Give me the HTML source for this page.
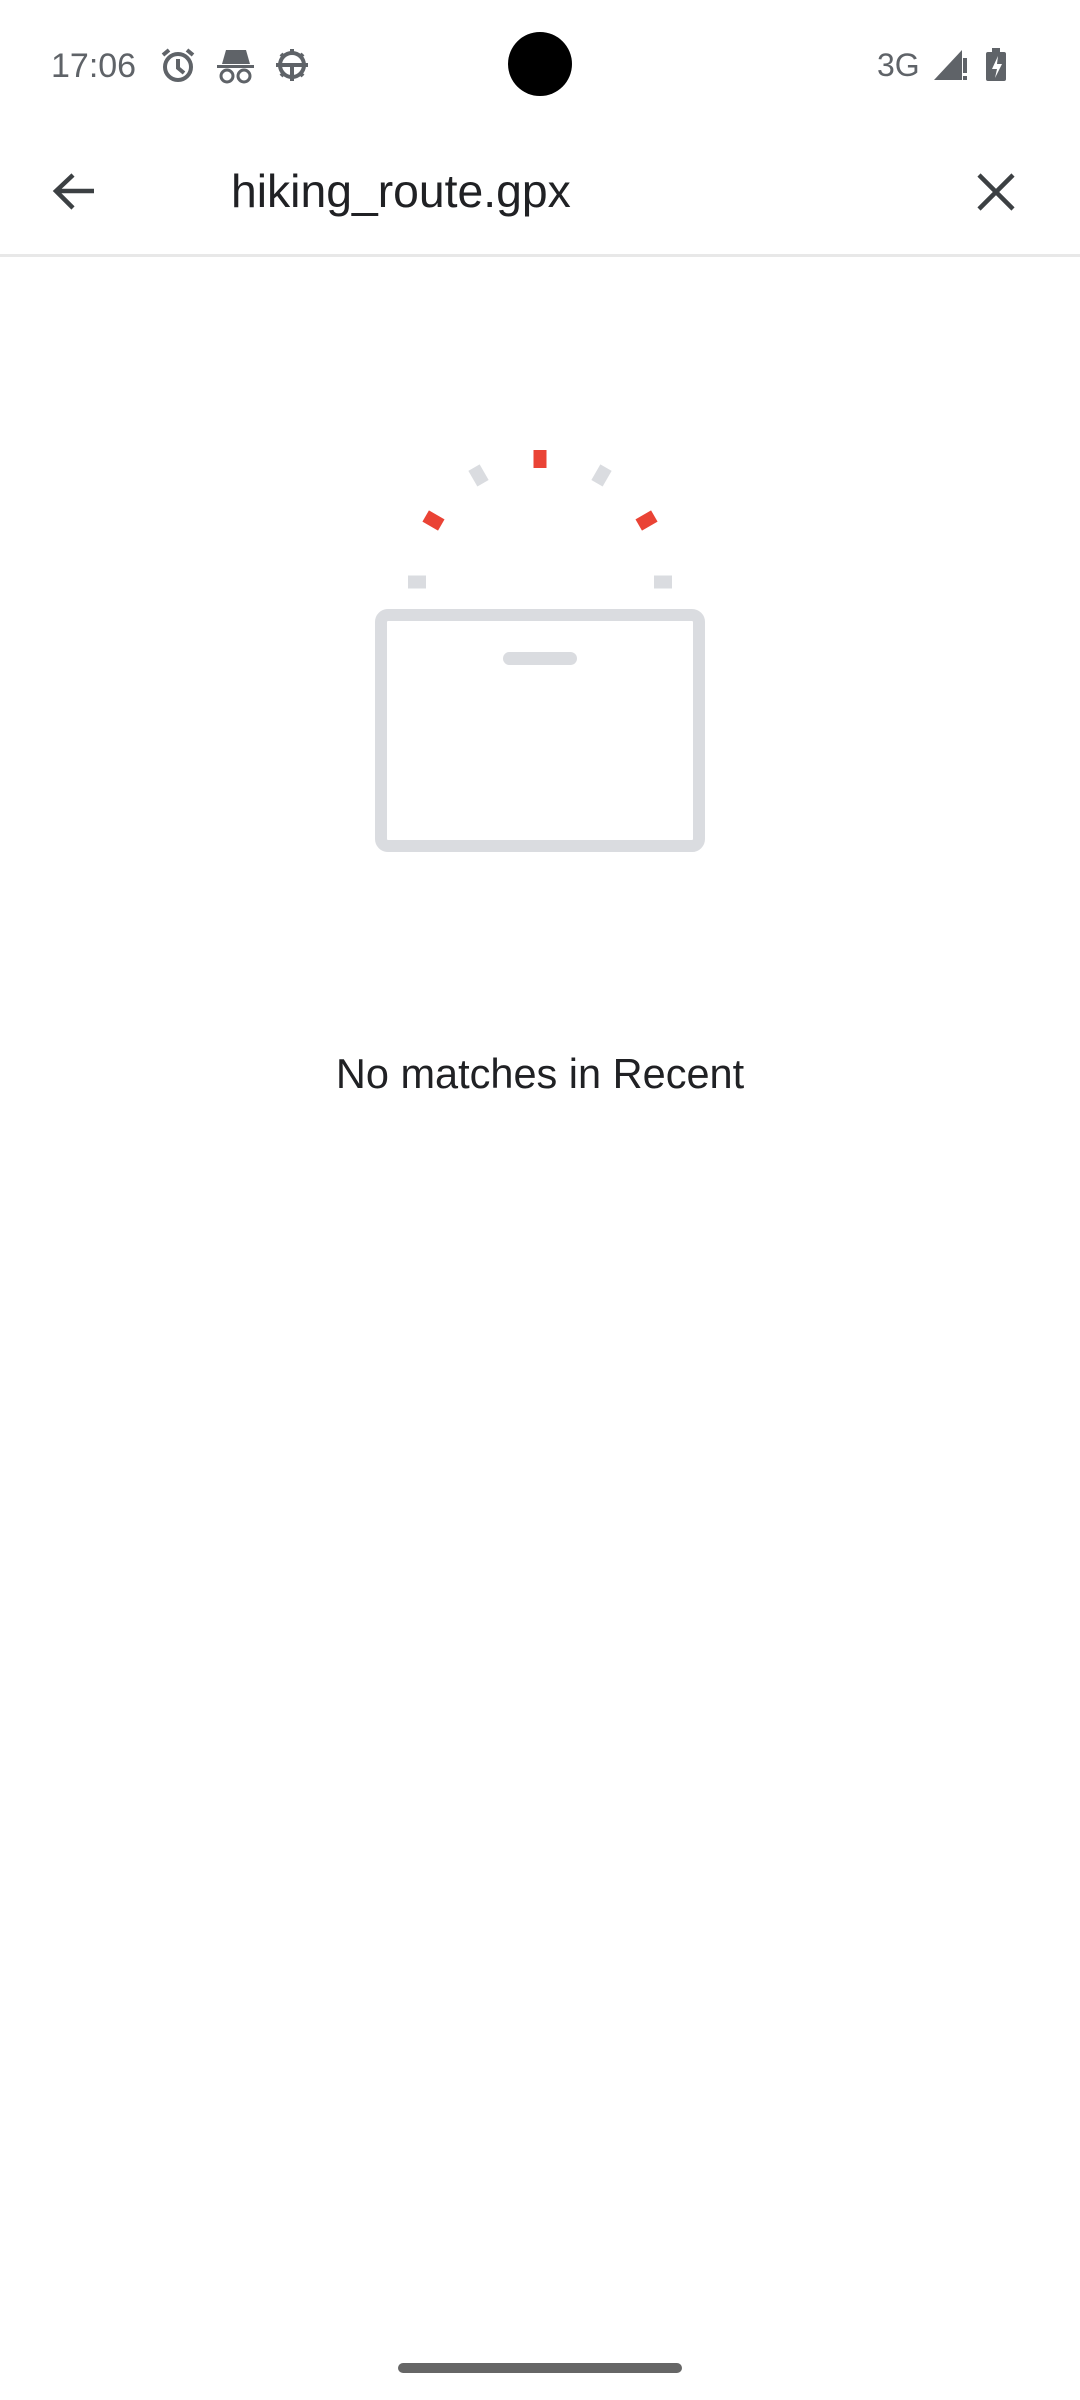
<!DOCTYPE html>
<html><head><meta charset="utf-8"><style>
html,body{margin:0;padding:0;background:#fff;}
body{width:1080px;height:2400px;position:relative;overflow:hidden;font-family:"Liberation Sans",sans-serif;}
.t{position:absolute;white-space:nowrap;}
</style></head><body>
<div class="t" style="left:51px;top:44px;font-size:34px;color:#5f6368;line-height:44px;">17:06</div>
<svg style="position:absolute;left:0;top:0" width="1080" height="260">
 <g stroke="#5f6368" stroke-width="4" fill="none">
  <circle cx="178" cy="67" r="13"/>
  <path d="M178 59v9l6 5"/>
  <path d="M163 55l6-5M193 55l-6-5"/>
 </g>
 <g fill="#5f6368">
  <path d="M222 64h28l-4-14h-20z"/>
  <rect x="217" y="65" width="37" height="3"/>
 </g>
 <g stroke="#5f6368" stroke-width="3" fill="none"><circle cx="227" cy="76" r="6"/><circle cx="244" cy="76" r="6"/></g>
 <g stroke="#5f6368" stroke-width="4" fill="none">
  <circle cx="292" cy="65" r="12"/>
  <path d="M292 49v5M292 76v5M276 65h5M303 65h5M281 54l3 3M300 73l3 3M303 54l-3 3M284 73l-3 3"/>
  <path d="M281 65h22M292 65v11"/>
 </g>
 <circle cx="540" cy="64" r="32" fill="#000"/>
 <text x="877" y="76" font-family="Liberation Sans" font-size="32" fill="#5f6368">3G</text>
 <path d="M934 80L962 50V80Z" fill="#5f6368"/>
 <rect x="963" y="58" width="4" height="15" fill="#5f6368"/><rect x="963" y="76" width="4" height="4" fill="#5f6368"/>
 <rect x="986" y="52" width="20" height="29" rx="2" fill="#5f6368"/><rect x="992" y="48" width="8" height="5" fill="#5f6368"/>
 <path d="M998 56l-6 13h5l-2 9 7-14h-5z" fill="#fff"/>
 <path d="M94 191H58M73 175L56 191l17 17" stroke="#3c4043" stroke-width="4.5" fill="none"/>
 <path d="M979 175l34 34M1013 175l-34 34" stroke="#3c4043" stroke-width="4.5" fill="none"/>
</svg>
<div class="t" style="left:231px;top:163px;font-size:46.3px;color:#202124;line-height:56px;">hiking_route.gpx</div>
<div style="position:absolute;left:0;top:254px;width:1080px;height:3px;background:#e8e8e8"></div>
<svg style="position:absolute;left:0;top:0" width="1080" height="900">
 <g>
  <rect x="533.5" y="450" width="13" height="18" fill="#ea4335" transform="rotate(0 540 582)"/>
  <rect x="533.5" y="450" width="13" height="18" fill="#dadce0" transform="rotate(-30 540 582)"/>
  <rect x="533.5" y="450" width="13" height="18" fill="#dadce0" transform="rotate(30 540 582)"/>
  <rect x="533.5" y="450" width="13" height="18" fill="#ea4335" transform="rotate(-60 540 582)"/>
  <rect x="533.5" y="450" width="13" height="18" fill="#ea4335" transform="rotate(60 540 582)"/>
  <rect x="533.5" y="450" width="13" height="18" fill="#dadce0" transform="rotate(-90 540 582)"/>
  <rect x="533.5" y="450" width="13" height="18" fill="#dadce0" transform="rotate(90 540 582)"/>
 </g>
 <rect x="381" y="615" width="318" height="231" rx="7" fill="none" stroke="#dadce0" stroke-width="12"/>
 <rect x="503" y="652" width="74" height="13" rx="6.5" fill="#dadce0"/>
</svg>
<div class="t" style="left:0;width:1080px;text-align:center;top:1049px;font-size:41.5px;color:#202124;line-height:50px;">No matches in Recent</div>
<div style="position:absolute;left:398px;top:2363px;width:284px;height:10px;border-radius:5px;background:#666"></div>
</body></html>
